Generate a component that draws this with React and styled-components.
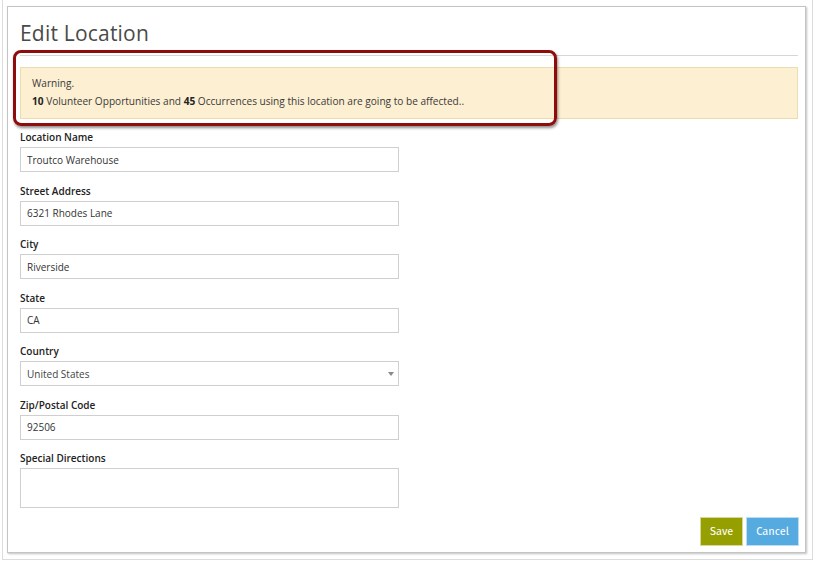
import React from 'react';
import styled, { createGlobalStyle } from 'styled-components';

const GlobalStyle = createGlobalStyle`
  html, body {
    margin: 0;
    padding: 0;
    background: #ffffff;
  }
  body {
    font-family: "Open Sans", "Liberation Sans", Arial, sans-serif;
    color: #333;
  }
`;

const fields = [
  { label: 'Location Name', value: 'Troutco Warehouse' },
  { label: 'Street Address', value: '6321 Rhodes Lane' },
  { label: 'City', value: 'Riverside' },
  { label: 'State', value: 'CA' },
  { label: 'Country', value: 'United States', select: true },
  { label: 'Zip/Postal Code', value: '92506' },
];

const App = () => {
  return (
    <>
      <GlobalStyle />
      <Screen>
        <Panel>
          <Title>Edit Location</Title>
          <Divider />
          <Warning>
            <WarningLine>Warning.</WarningLine>
            <WarningLine>
              <b>10</b> Volunteer Opportunities and <b>45</b> Occurrences using this location are going to be affected..
            </WarningLine>
          </Warning>

          <Form>
            {fields.map((f) => (
              <Field key={f.label}>
                <Label>{f.label}</Label>
                {f.select ? (
                  <SelectBox>
                    {f.value}
                    <Caret />
                  </SelectBox>
                ) : (
                  <Input readOnly value={f.value} />
                )}
              </Field>
            ))}
            <Field>
              <Label>Special Directions</Label>
              <TextArea readOnly value="" />
            </Field>
          </Form>

          <Actions>
            <Button $bg="#969f00">Save</Button>
            <Button $bg="#55aadf">Cancel</Button>
          </Actions>

          <Highlight />
        </Panel>
      </Screen>
    </>
  );
};

// styled components
const Screen = styled.div`
  box-sizing: border-box;
  width: 811px;
  height: 560px;
  margin-left: 2px;
  padding: 6px 7px 0 4px;
  border-left: 1px solid #dcdcdc;
  border-right: 1px solid #dcdcdc;
  border-bottom: 1px solid #dcdcdc;
`;

const Panel = styled.div`
  position: relative;
  box-sizing: border-box;
  width: 799px;
  height: 547px;
  padding: 12px 6px 0 12px;
  background: #fff;
  border: 1px solid #c4c4c4;
  box-shadow: 1px 1px 2px rgba(0, 0, 0, 0.25);
`;

const Title = styled.h1`
  margin: 0;
  font-size: 21px;
  line-height: 28px;
  font-weight: 400;
  color: #4a4a4a;
  letter-spacing: 0.2px;
`;

const Divider = styled.div`
  margin-top: 8px;
  margin-right: 1px;
  border-top: 1px solid #d6d6d6;
`;

const Warning = styled.div`
  margin-top: 11px;
  margin-right: 1px;
  padding: 6px 11px 8px;
  background: #fdefd1;
  border: 1px solid #eddcb2;
`;

const WarningLine = styled.div`
  font-size: 10.1px;
  line-height: 18px;
  color: #3a3a3a;

  b {
    font-weight: 700;
    color: #222;
  }
`;

const Form = styled.div`
  margin-top: 11px;
  display: flex;
  flex-direction: column;
`;

const Field = styled.div`
  display: flex;
  flex-direction: column;
  margin-bottom: 11.5px;
`;

const Label = styled.label`
  font-size: 10px;
  line-height: 14px;
  font-weight: 600;
  color: #222;
`;

const Input = styled.input`
  box-sizing: border-box;
  margin: 3px 0 0;
  width: 379px;
  height: 25px;
  padding: 0 6px;
  border: 1px solid #cfcfcf;
  background: #fff;
  font-family: inherit;
  font-size: 10px;
  color: #333;
  outline: none;
`;

const SelectBox = styled.div`
  box-sizing: border-box;
  position: relative;
  display: flex;
  align-items: center;
  margin-top: 3px;
  width: 379px;
  height: 25px;
  padding: 0 6px;
  border: 1px solid #cfcfcf;
  font-size: 10px;
  color: #444;
`;

const Caret = styled.span`
  position: absolute;
  right: 4px;
  top: 10px;
  width: 0;
  height: 0;
  border-left: 3px solid transparent;
  border-right: 3px solid transparent;
  border-top: 4px solid #888;
`;

const TextArea = styled.textarea`
  box-sizing: border-box;
  margin: 3px 0 0;
  width: 379px;
  height: 40px;
  border: 1px solid #cfcfcf;
  resize: none;
  outline: none;
  font-family: inherit;
`;

const Actions = styled.div`
  display: flex;
  justify-content: flex-end;
  gap: 3px;
  margin-top: -3px;
`;

const Button = styled.button`
  box-sizing: border-box;
  height: 29px;
  padding: 0 9px;
  border: 1px solid rgba(255, 255, 255, 0.6);
  background: ${(p) => p.$bg};
  color: #fff;
  font-family: "Fira Sans", "Open Sans", sans-serif;
  font-size: 11px;
  cursor: pointer;
`;

const Highlight = styled.div`
  position: absolute;
  left: 5px;
  top: 43px;
  width: 544px;
  height: 76px;
  box-sizing: border-box;
  border: 3px solid #8e0c0c;
  border-radius: 8px;
  box-shadow: 1px 2px 3px rgba(0, 0, 0, 0.45);
  pointer-events: none;
`;

export default App;
